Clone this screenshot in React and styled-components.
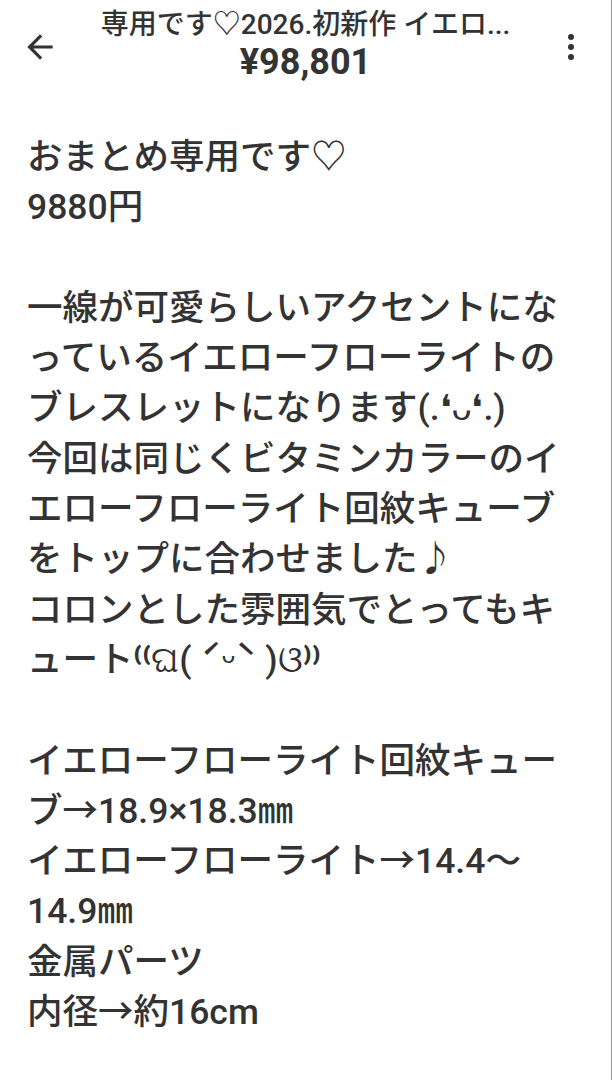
import styled, { createGlobalStyle } from "styled-components";

const GlobalStyle = createGlobalStyle`
  html, body {
    margin: 0;
    padding: 0;
    background: #ffffff;
  }
  body {
    font-family: Roboto, "Noto Sans CJK JP", sans-serif;
    color: #333333;
  }
`;

const lines = [
    "おまとめ専用です♡",
    "9880円",
    "",
    "一線が可愛らしいアクセントになっているイエローフローライトのブレスレットになります(.❛ᴗ❛.)",
    "今回は同じくビタミンカラーのイエローフローライト回紋キューブをトップに合わせました♪",
    "コロンとした雰囲気でとってもキュート⁽⁽ଘ( ˊᵕˋ )ଓ⁾⁾",
    "",
    "イエローフローライト回紋キューブ→18.9×18.3㎜",
    "イエローフローライト→14.4〜14.9㎜",
    "金属パーツ",
    "内径→約16cm",
];

const App = () => {
    return (
        <Page>
            <GlobalStyle />
            <Header>
                <IconButton aria-label="back">
                    <svg width="38" height="38" viewBox="0 0 24 24">
                        <path fill="#333" d="M20 11H7.83l5.59-5.59L12 4l-8 8 8 8 1.41-1.41L7.83 13H20v-2z" />
                    </svg>
                </IconButton>
                <TitleBlock>
                    <Title>専用です♡2026.初新作 イエロ...</Title>
                    <Price>¥98,801</Price>
                </TitleBlock>
                <IconButton aria-label="menu">
                    <svg width="40" height="40" viewBox="0 0 24 24">
                        <circle cx="12" cy="6" r="1.8" fill="#333" />
                        <circle cx="12" cy="12" r="1.8" fill="#333" />
                        <circle cx="12" cy="18" r="1.8" fill="#333" />
                    </svg>
                </IconButton>
            </Header>
            <Description>
                {lines.map((l, i) => (
                    <Line key={i}>{l || "\u00a0"}</Line>
                ))}
            </Description>
        </Page>
    );
};

const Page = styled.div`
min-height: 1080px;
box-sizing: border-box;
border-right: 1px solid #9a9a9a;
background: #ffffff;
`;

const Header = styled.header`
height: 100px;
display: flex;
align-items: flex-start;
justify-content: space-between;
padding: 0 20px 0 20px;
box-sizing: border-box;
`;

const IconButton = styled.div`
width: 40px;
height: 40px;
margin-top: 27px;
display: flex;
align-items: center;
justify-content: center;
flex-shrink: 0;
`;

const TitleBlock = styled.div`
flex: 1;
min-width: 0;
display: flex;
flex-direction: column;
align-items: center;
padding-top: 8px;
`;

const Title = styled.div`
font-size: 28px;
line-height: 34px;
font-weight: 500;
color: #333;
white-space: nowrap;
`;

const Price = styled.div`
font-size: 36px;
line-height: 40px;
font-weight: 700;
color: #333;
`;

const Description = styled.div`
width: 545px;
padding: 32px 0 40px 27px;
font-size: 35.5px;
line-height: 50.3px;
font-weight: 500;
color: #333;
line-break: loose;
`;

const Line = styled.div`
white-space: pre-wrap;
`;

export default App;
